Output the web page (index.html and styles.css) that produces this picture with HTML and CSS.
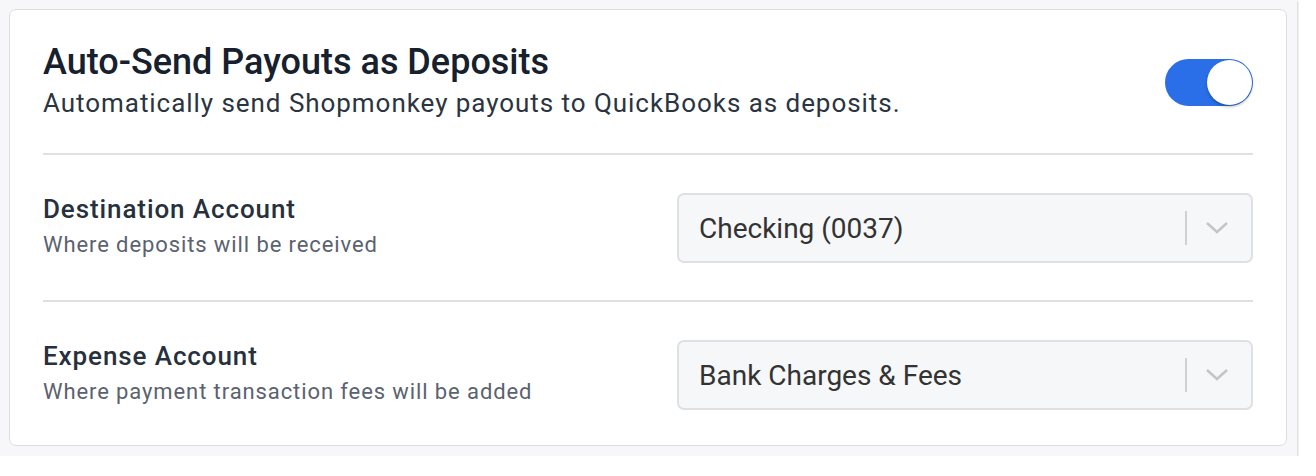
FILE: index.html
```html
<!DOCTYPE html>
<html lang="en">
<head>
    <meta charset="UTF-8">
    <meta name="viewport" content="width=device-width, initial-scale=1.0">
    <title>QuickBooks Deposits</title>
    <link rel="stylesheet" href="styles.css">
</head>
<body>
    <div class="frame">
        <div class="card">
            <div class="header">
                <div>
                    <h1 class="title">Auto-Send Payouts as Deposits</h1>
                    <p class="subtitle">Automatically send Shopmonkey payouts to QuickBooks as deposits.</p>
                </div>
                <label class="toggle">
                    <input type="checkbox" checked>
                    <span class="track"><span class="knob"></span></span>
                </label>
            </div>

            <div class="row">
                <div>
                    <div class="label">Destination Account</div>
                    <div class="hint">Where deposits will be received</div>
                </div>
                <div class="select">
                    <span class="select-value">Checking (0037)</span>
                    <span class="select-sep"></span>
                    <svg class="chevron" width="24" height="14" viewBox="0 0 24 14">
                        <path d="M2 2 L12 11 L22 2" fill="none" stroke="#c3c5ca" stroke-width="2.5"/>
                    </svg>
                </div>
            </div>

            <div class="row">
                <div>
                    <div class="label">Expense Account</div>
                    <div class="hint">Where payment transaction fees will be added</div>
                </div>
                <div class="select">
                    <span class="select-value">Bank Charges &amp; Fees</span>
                    <span class="select-sep"></span>
                    <svg class="chevron" width="24" height="14" viewBox="0 0 24 14">
                        <path d="M2 2 L12 11 L22 2" fill="none" stroke="#c3c5ca" stroke-width="2.5"/>
                    </svg>
                </div>
            </div>
        </div>
    </div>
</body>
</html>
```

FILE: styles.css
```css
body {
    margin: 0;
    background-color: #ffffff;
    font-family: Roboto, "Noto Sans", sans-serif;
}
.frame {
    width: 1297px;
    height: 456px;
    box-sizing: border-box;
    padding: 9px 10px 10px 9px;
    background-color: #f7f7f9;
    box-shadow: 1px 1px 2px rgba(0, 0, 0, 0.18);
}
.card {
    height: 437px;
    box-sizing: border-box;
    padding: 0 33px;
    background-color: #ffffff;
    border: 1px solid #dcdde2;
    border-radius: 7px;
}
/* Header with toggle */
.header {
    display: flex;
    justify-content: space-between;
    align-items: center;
    padding: 31px 0 30px;
    border-bottom: 2px solid #dfe0e4;
}
.title {
    margin: 0;
    font-size: 36px;
    font-weight: 500;
    line-height: 42px;
    color: #17202d;
}
.subtitle {
    margin: 0;
    font-size: 26px;
    letter-spacing: 0.95px;
    line-height: 40px;
    color: #2b3441;
}
.toggle input {
    display: none;
}
.track {
    display: block;
    width: 88px;
    height: 47px;
    border-radius: 24px;
    background-color: #2a6ee8;
    position: relative;
}
.knob {
    position: absolute;
    top: 1px;
    right: 1px;
    width: 45px;
    height: 45px;
    border-radius: 50%;
    background-color: #ffffff;
    box-shadow: 0 2px 3px rgba(0, 0, 0, 0.25);
}
/* Account rows */
.row {
    display: grid;
    grid-template-columns: 1fr 576px;
    align-items: center;
    padding: 37px 0 36px;
    border-bottom: 2px solid #dfe0e4;
}
.row:last-child {
    border-bottom: none;
}
.label {
    font-size: 26px;
    font-weight: 500;
    letter-spacing: 0.9px;
    line-height: 34px;
    color: #27303d;
}
.hint {
    font-size: 22px;
    letter-spacing: 0.9px;
    line-height: 38px;
    color: #5a6270;
}
.select {
    display: flex;
    align-items: center;
    height: 70px;
    box-sizing: border-box;
    padding: 0 22px 0 20px;
    background-color: #f6f7f9;
    border: 2px solid #dfe0e4;
    border-radius: 7px;
}
.select-value {
    flex: 1;
    font-size: 28px;
    color: #333333;
}
.select-sep {
    width: 2px;
    height: 34px;
    background-color: #cfd1d5;
    margin-right: 18px;
}
.chevron {
    display: block;
}
```
